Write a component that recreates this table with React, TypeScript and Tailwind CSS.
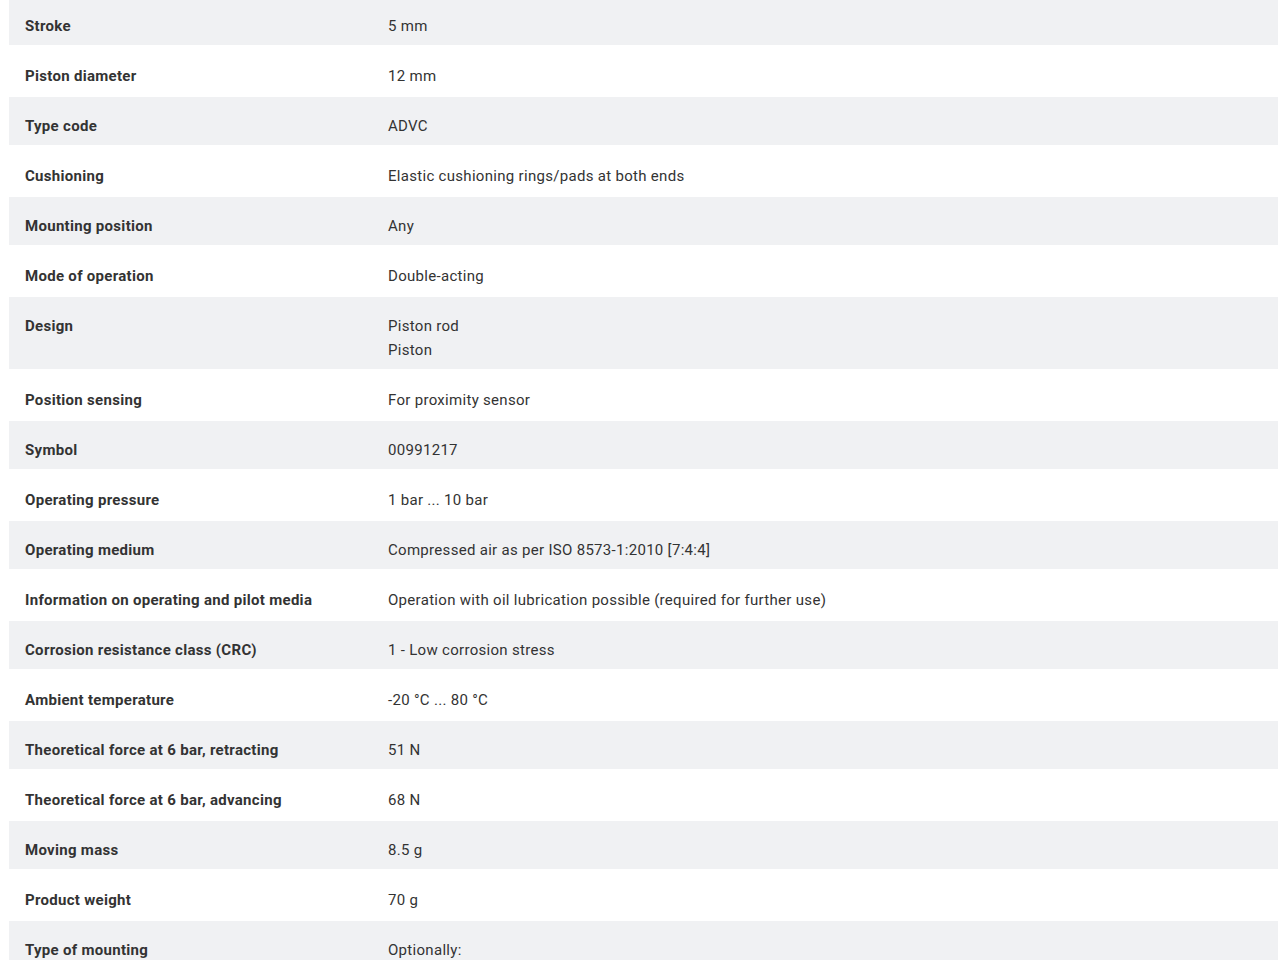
const rows: { label: string; value: string[] }[] = [
  { label: "Stroke", value: ["5 mm"] },
  { label: "Piston diameter", value: ["12 mm"] },
  { label: "Type code", value: ["ADVC"] },
  { label: "Cushioning", value: ["Elastic cushioning rings/pads at both ends"] },
  { label: "Mounting position", value: ["Any"] },
  { label: "Mode of operation", value: ["Double-acting"] },
  { label: "Design", value: ["Piston rod", "Piston"] },
  { label: "Position sensing", value: ["For proximity sensor"] },
  { label: "Symbol", value: ["00991217"] },
  { label: "Operating pressure", value: ["1 bar ... 10 bar"] },
  { label: "Operating medium", value: ["Compressed air as per ISO 8573-1:2010 [7:4:4]"] },
  {
    label: "Information on operating and pilot media",
    value: ["Operation with oil lubrication possible (required for further use)"],
  },
  { label: "Corrosion resistance class (CRC)", value: ["1 - Low corrosion stress"] },
  { label: "Ambient temperature", value: ["-20 °C ... 80 °C"] },
  { label: "Theoretical force at 6 bar, retracting", value: ["51 N"] },
  { label: "Theoretical force at 6 bar, advancing", value: ["68 N"] },
  { label: "Moving mass", value: ["8.5 g"] },
  { label: "Product weight", value: ["70 g"] },
  { label: "Type of mounting", value: ["Optionally:"] },
];

export default function App() {
  return (
    <div className="h-screen bg-white overflow-hidden font-['Roboto',sans-serif] text-[15px] tracking-[0.3px] text-[#333333]">
      <div className="ml-[9px] -mt-[4px]">
        {rows.map((row, i) => (
          <div
            key={row.label}
            className={`flex border-y border-white ${i % 2 === 0 ? "bg-[#f0f1f3]" : "bg-white"}`}
          >
            <div className="w-[363px] shrink-0 px-4 pt-[17px] pb-[7px] leading-6 font-bold">
              {row.label}
            </div>
            <div className="flex-1 px-4 pt-[17px] pb-[7px] leading-6">
              {row.value.map((v) => (
                <div key={v}>{v}</div>
              ))}
            </div>
          </div>
        ))}
      </div>
    </div>
  );
}
